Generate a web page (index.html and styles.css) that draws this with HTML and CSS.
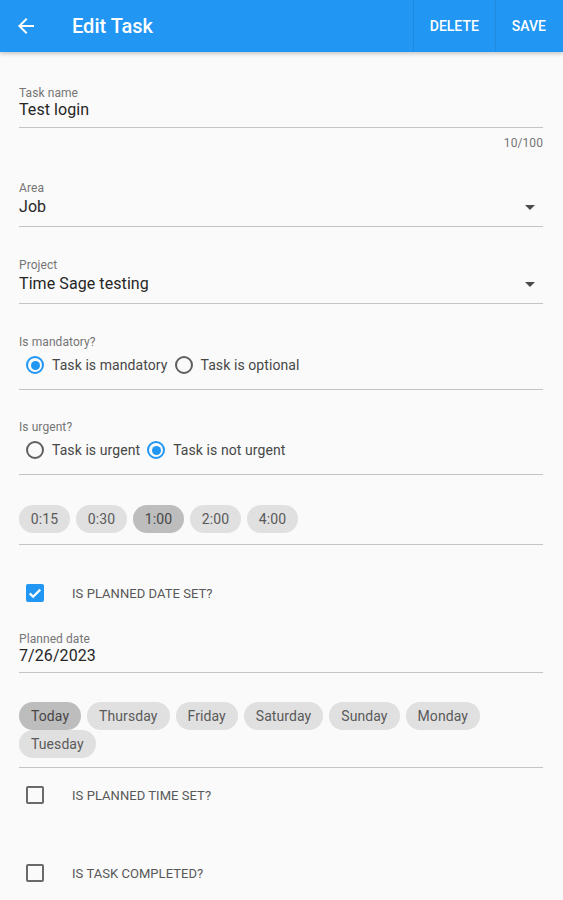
FILE: index.html
```html
<!DOCTYPE html>
<html>
<head>
<meta charset="utf-8">
<link rel="stylesheet" href="styles.css">
</head>
<body>
<header class="appbar">
  <button class="back" aria-label="Back">
    <svg viewBox="0 0 24 24" width="24" height="24"><path fill="#fff" d="M20 11H7.83l5.59-5.59L12 4l-8 8 8 8 1.41-1.41L7.83 13H20v-2z"/></svg>
  </button>
  <h1 class="title">Edit Task</h1>
  <div class="actions">
    <button class="action">DELETE</button>
    <button class="action">SAVE</button>
  </div>
</header>
<main class="form">
  <div class="field field-name">
    <div class="label">Task name</div>
    <div class="value">Test login</div>
  </div>
  <div class="counter">10/100</div>

  <div class="field select field-area">
    <div class="label">Area</div>
    <div class="value row"><span>Job</span><svg class="drop" viewBox="7 10 10 5" width="10" height="5"><path d="M7 10l5 5 5-5z"/></svg></div>
  </div>

  <div class="field select field-project">
    <div class="label">Project</div>
    <div class="value row"><span>Time Sage testing</span><svg class="drop" viewBox="7 10 10 5" width="10" height="5"><path d="M7 10l5 5 5-5z"/></svg></div>
  </div>

  <div class="group group-mand">
    <div class="label">Is mandatory?</div>
    <div class="radios">
      <span class="radio on"></span><span class="rlabel">Task is mandatory</span>
      <span class="radio"></span><span class="rlabel">Task is optional</span>
    </div>
  </div>

  <div class="group group-urgent">
    <div class="label">Is urgent?</div>
    <div class="radios">
      <span class="radio"></span><span class="rlabel">Task is urgent</span>
      <span class="radio on"></span><span class="rlabel">Task is not urgent</span>
    </div>
  </div>

  <div class="chips chips-time">
    <span class="chip">0:15</span>
    <span class="chip">0:30</span>
    <span class="chip sel">1:00</span>
    <span class="chip">2:00</span>
    <span class="chip">4:00</span>
  </div>

  <div class="check check-date">
    <span class="box on"><svg viewBox="0 0 24 24" width="18" height="18"><path fill="none" stroke="#fff" stroke-width="3" d="M5 12.5l4.5 4.5L19 7.5"/></svg></span>
    <span class="clabel">IS PLANNED DATE SET?</span>
  </div>

  <div class="field field-date">
    <div class="label">Planned date</div>
    <div class="value">7/26/2023</div>
  </div>

  <div class="chips chips-day">
    <span class="chip sel">Today</span>
    <span class="chip">Thursday</span>
    <span class="chip">Friday</span>
    <span class="chip">Saturday</span>
    <span class="chip">Sunday</span>
    <span class="chip">Monday</span>
    <span class="chip">Tuesday</span>
  </div>

  <div class="check check-time">
    <span class="box"></span>
    <span class="clabel">IS PLANNED TIME SET?</span>
  </div>

  <div class="check check-done">
    <span class="box"></span>
    <span class="clabel">IS TASK COMPLETED?</span>
  </div>
</main>
</body>
</html>
```

FILE: styles.css
```css
* { box-sizing: border-box; }
html, body { margin: 0; padding: 0; }
body {
  background: #fafafa;
  font-family: Roboto, "Noto Sans", sans-serif;
  color: #212121;
  width: 563px;
  height: 900px;
  overflow: hidden;
  letter-spacing: 0.08px;
}
button { font-family: inherit; border: 0; background: none; padding: 0; cursor: pointer; letter-spacing: inherit; }

.appbar {
  height: 52px;
  background: #2196f3;
  display: flex;
  align-items: center;
  box-shadow: 0 2px 4px rgba(0,0,0,0.2);
  position: relative;
  z-index: 1;
}
.back {
  width: 24px;
  height: 24px;
  margin-left: 14px;
  margin-top: -1px;
  display: flex;
}
.title {
  margin: 0 0 0 34px;
  font-size: 20px;
  font-weight: 500;
  color: #fff;
  flex: 1;
  line-height: 24px;
  letter-spacing: 0;
}
.actions { display: flex; height: 52px; }
.action {
  height: 52px;
  color: #fff;
  font-size: 14px;
  font-weight: 500;
  border-left: 1px solid rgba(0,0,0,0.07);
  padding: 0 16px;
  letter-spacing: 0;
}
.action + .action { padding: 0 17px 0 16px; }

.form { padding: 0 20px 0 19px; }

.label {
  font-size: 12px;
  line-height: 14px;
  color: #757575;
}
.field {
  border-bottom: 1px solid #c4c4c4;
  padding-bottom: 7px;
}
.value {
  font-size: 16px;
  line-height: 20px;
  color: #262626;
}
.field-name { margin-top: 34px; }
.counter {
  text-align: right;
  font-size: 12px;
  line-height: 14px;
  color: #757575;
  margin-top: 8px;
}
.select .value { line-height: 24px; }
.row { display: flex; align-items: center; justify-content: space-between; }
.drop { fill: #4a4a4a; margin-right: 8px; }
.field-area { margin-top: 31px; }
.field-project { margin-top: 31px; }

.group {
  border-bottom: 1px solid #c4c4c4;
  padding-bottom: 10px;
}
.group-mand { margin-top: 31px; }
.group-urgent { margin-top: 30px; }
.radios {
  display: flex;
  align-items: center;
  height: 28px;
  margin-top: 2px;
  padding-left: 7px;
}
.radio {
  width: 18px;
  height: 18px;
  border: 2px solid #5f5f5f;
  border-radius: 50%;
  display: flex;
  align-items: center;
  justify-content: center;
  margin-right: 8px;
  flex: none;
}
.radio.on { border-color: #2196f3; }
.radio.on::after {
  content: "";
  width: 9px;
  height: 9px;
  border-radius: 50%;
  background: #2196f3;
}
.rlabel {
  font-size: 14px;
  color: #474747;
  margin-right: 7px;
}

.chips {
  display: flex;
  flex-wrap: wrap;
  column-gap: 6px;
  row-gap: 0;
  border-bottom: 1px solid #c4c4c4;
}
.chip {
  height: 28px;
  line-height: 28px;
  padding: 0 12px;
  border-radius: 14px;
  background: #e0e0e0;
  font-size: 14px;
  color: #5a5a5a;
}
.chip.sel { background: #bdbdbd; color: #474747; }
.chips-time { margin-top: 30px; padding-bottom: 11px; }
.chips-time .chip { width: 51px; text-align: center; padding: 0; }
.chips-day { margin-top: 29px; padding-bottom: 9px; }

.check {
  height: 48px;
  display: flex;
  align-items: center;
  padding-left: 7px;
}
.box {
  width: 18px;
  height: 18px;
  border: 2px solid #6a6a6a;
  border-radius: 2px;
  margin-right: 28px;
  flex: none;
  display: flex;
}
.box.on { background: #2196f3; border: 0; }
.clabel {
  font-size: 13px;
  color: #585858;
  letter-spacing: 0.05px;
}
.check-date { margin-top: 24px; }
.field-date { margin-top: 15px; padding-bottom: 6px; }
.check-time { margin-top: 3px; }
.check-done { margin-top: 30px; }
```
